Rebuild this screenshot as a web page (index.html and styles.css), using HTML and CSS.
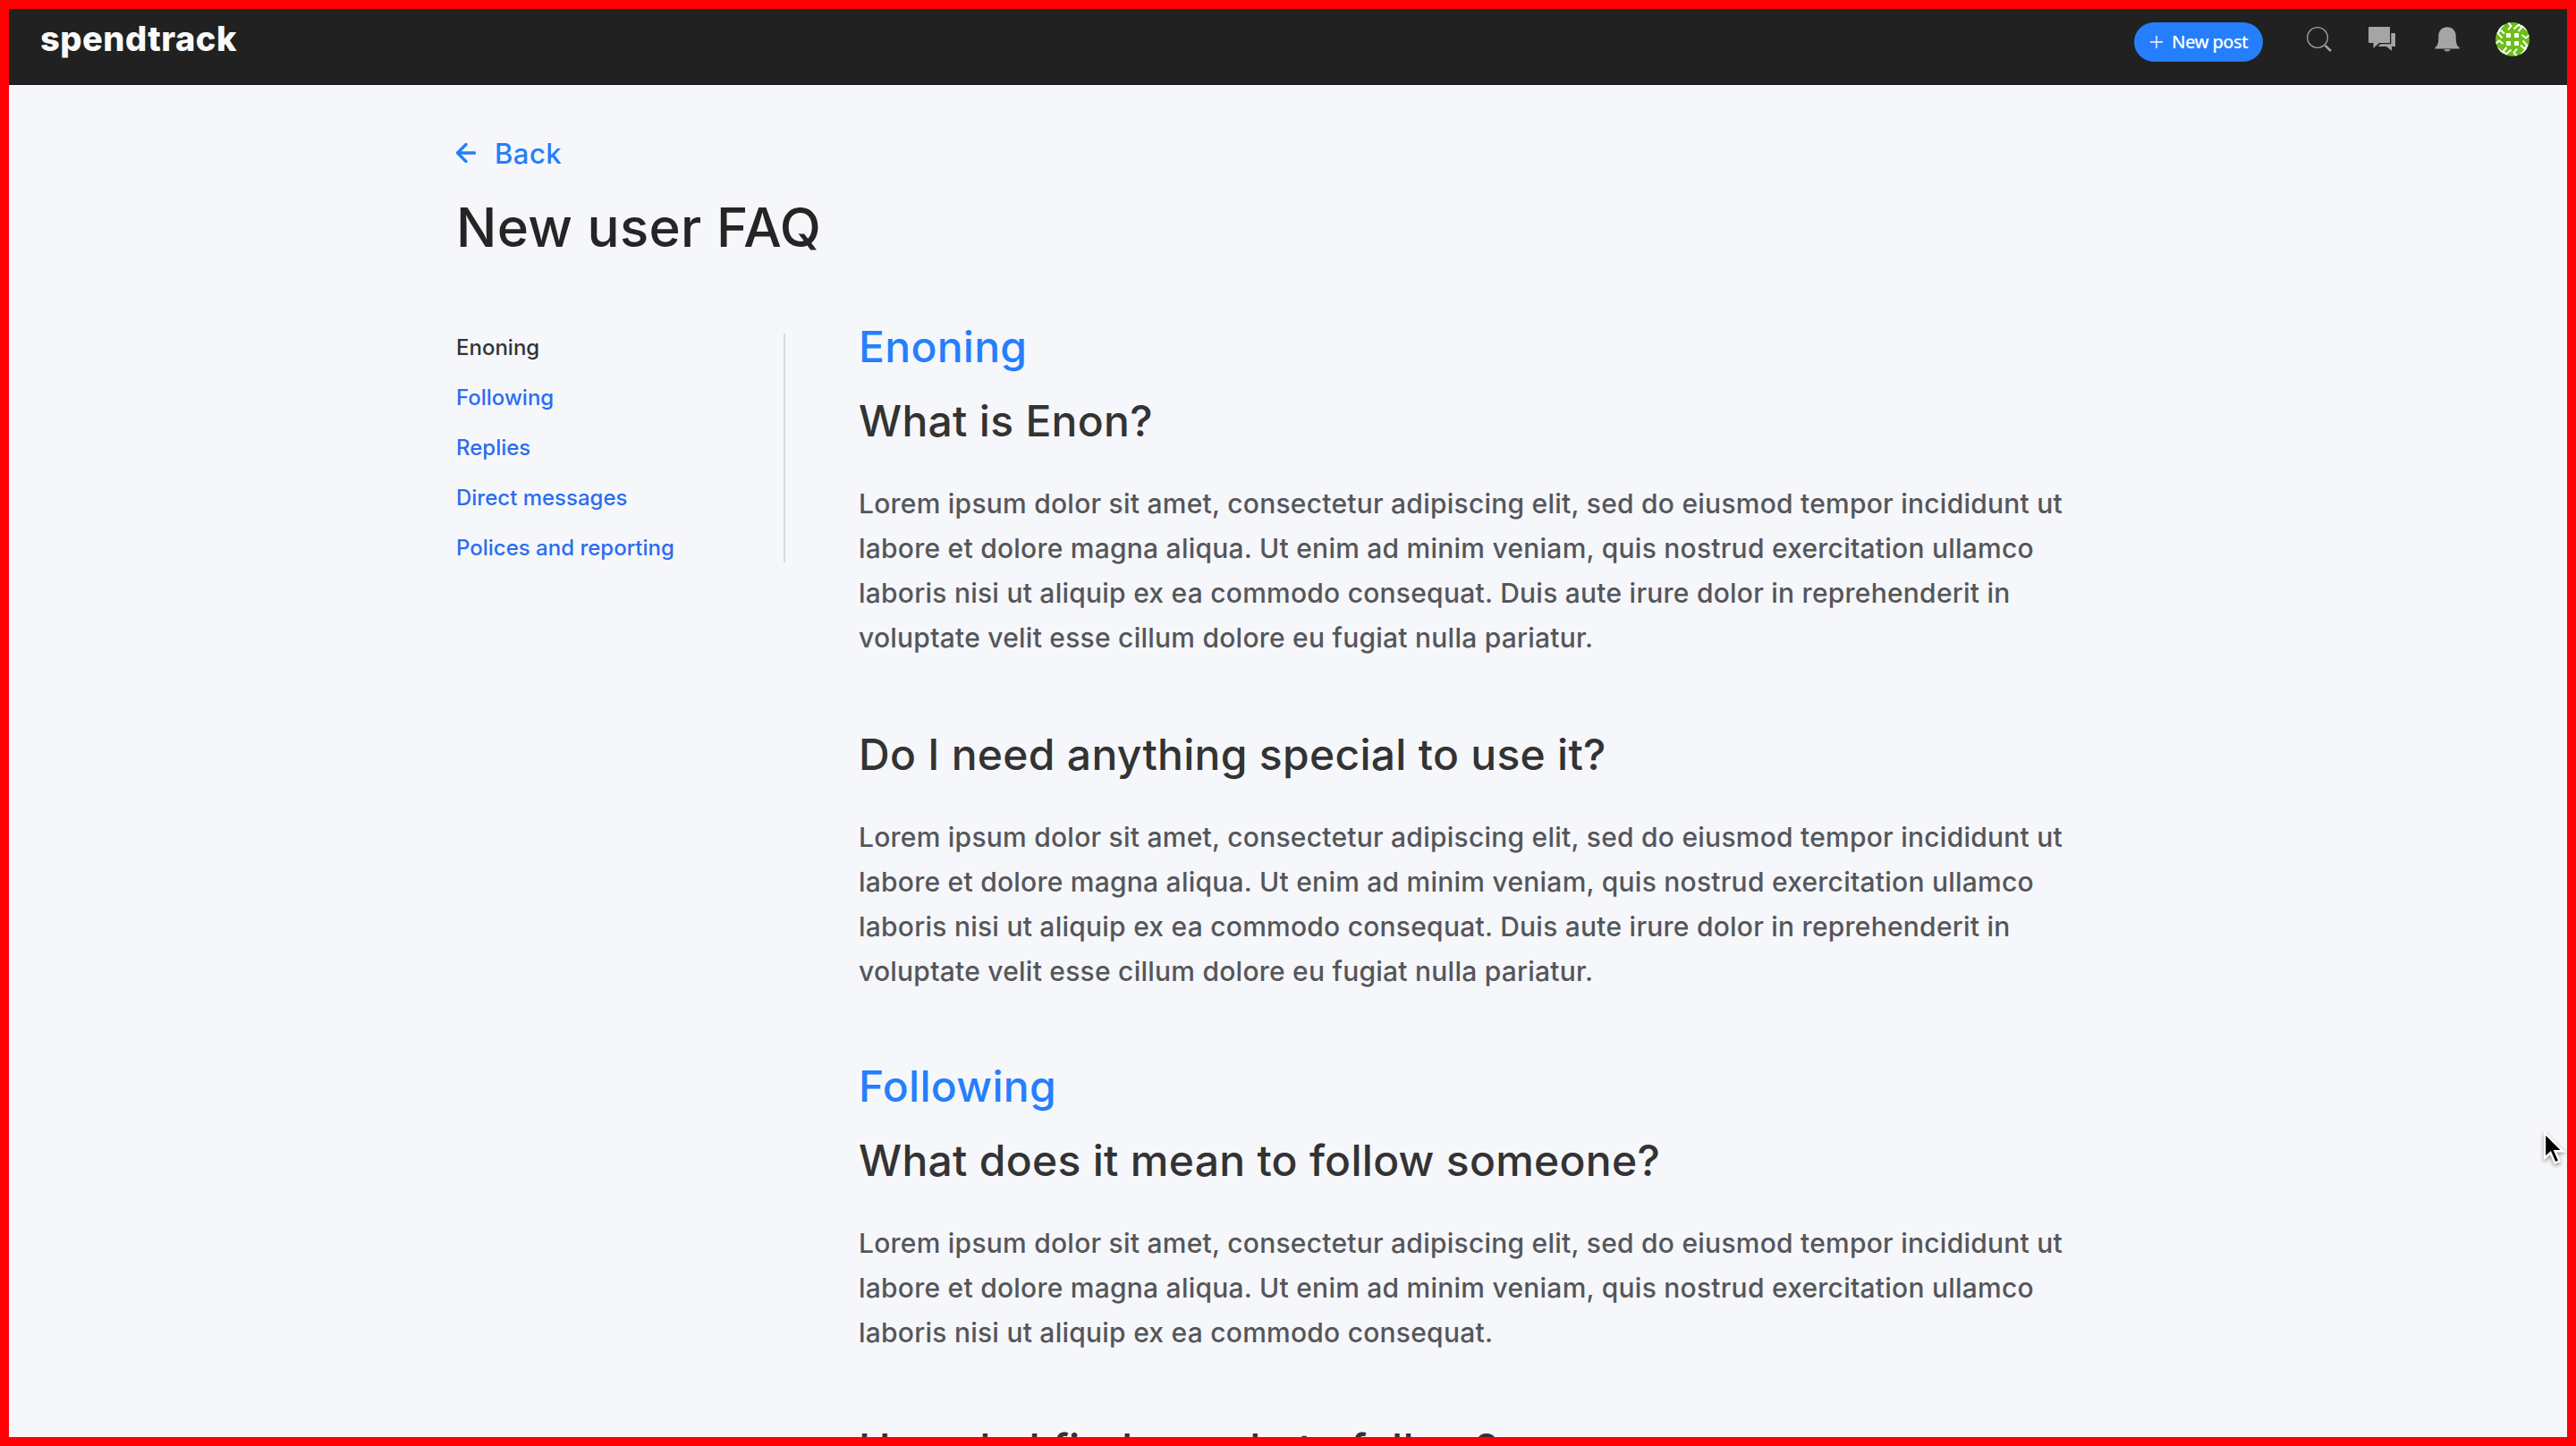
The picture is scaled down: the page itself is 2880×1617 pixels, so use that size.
FILE: index.html
```html
<!DOCTYPE html>
<html lang="en">

<head>
  <meta charset="utf-8">
  <title>New user FAQ - spendtrack</title>
  <link rel="stylesheet" href="styles.css">
</head>

<body>
  <header class="topbar">
    <a class="logo">spendtrack</a>
    <nav class="tools">
      <a class="new-post">
        <svg width="14" height="14" viewBox="0 0 14 14"><path d="M7 0v14M0 7h14" stroke="#fff" stroke-width="1.4" /></svg>
        <span>New post</span>
      </a>
      <svg class="icon-search" width="29" height="29" viewBox="0 0 29 29">
        <circle cx="12" cy="12" r="11.3" fill="none" stroke="#a5a5a5" stroke-width="1.3" />
        <path d="M20.6 20.8l6.4 6.4" stroke="#a5a5a5" stroke-width="2.6" />
      </svg>
      <svg class="icon-chat" width="30" height="28" viewBox="0 0 30 28">
        <path fill="#a5a5a5" d="M1 0h22q1 0 1 1v17H12l-6.500 6v-6H1q-1 0-1-1V1q0-1 1-1z" />
        <path fill="#a5a5a5" d="M25.300 7H29q1 0 1 1v14h-4v4.800L20 22h-9.500l3-2.800h11.800z" />
      </svg>
      <svg class="icon-bell" width="28" height="28" viewBox="0 0 28 28">
        <path fill="#a5a5a5" d="M14 .3C8.500.3 4.300 4.500 4.300 10c0 8-.6 10.500-3.900 13.300V24.500h27.200v-1.200C24.300 20.500 23.700 18 23.700 10 23.700 4.500 19.500.3 14 .3zM10.500 25.300c.7 3 6.300 3 7 0z" />
      </svg>
      <svg class="avatar" width="38" height="38" viewBox="0 0 38 38">
        <defs>
          <clipPath id="round"><circle cx="19" cy="19" r="19" /></clipPath>
          <g id="quarter">
            <path d="M12 12h5v5h-5z" fill="#fff" />
            <path d="M14 0l3.500 4-3.500 4.500M20.500 7.500L26 2.500l3.500 3-4 4.500M9.500 2L3 9" fill="none" stroke="#fff" stroke-width="1.900" />
          </g>
        </defs>
        <g clip-path="url(#round)">
          <rect width="38" height="38" fill="#6cbf17" />
          <use href="#quarter" />
          <use href="#quarter" transform="rotate(90 19 19)" />
          <use href="#quarter" transform="rotate(180 19 19)" />
          <use href="#quarter" transform="rotate(270 19 19)" />
        </g>
      </svg>
    </nav>
  </header>

  <main class="page">
    <a class="back">
      <svg width="22" height="22" viewBox="0 0 22 22"><path d="M20.500 11H2M11 1.500L1.500 11l9.500 9.500" /></svg>
      <span>Back</span>
    </a>
    <h1>New user FAQ</h1>

    <div class="columns">
      <ul class="side">
        <li class="active">Enoning</li>
        <li>Following</li>
        <li>Replies</li>
        <li>Direct messages</li>
        <li>Polices and reporting</li>
      </ul>

      <div class="content">
        <h2>Enoning</h2>
        <h3>What is Enon?</h3>
        <p>Lorem ipsum dolor sit amet, consectetur adipiscing elit, sed do eiusmod tempor incididunt ut<br>
          labore et dolore magna aliqua. Ut enim ad minim veniam, quis nostrud exercitation ullamco<br>
          laboris nisi ut aliquip ex ea commodo consequat. Duis aute irure dolor in reprehenderit in<br>
          voluptate velit esse cillum dolore eu fugiat nulla pariatur.</p>

        <h3>Do I need anything special to use it?</h3>
        <p>Lorem ipsum dolor sit amet, consectetur adipiscing elit, sed do eiusmod tempor incididunt ut<br>
          labore et dolore magna aliqua. Ut enim ad minim veniam, quis nostrud exercitation ullamco<br>
          laboris nisi ut aliquip ex ea commodo consequat. Duis aute irure dolor in reprehenderit in<br>
          voluptate velit esse cillum dolore eu fugiat nulla pariatur.</p>

        <h2>Following</h2>
        <h3>What does it mean to follow someone?</h3>
        <p>Lorem ipsum dolor sit amet, consectetur adipiscing elit, sed do eiusmod tempor incididunt ut<br>
          labore et dolore magna aliqua. Ut enim ad minim veniam, quis nostrud exercitation ullamco<br>
          laboris nisi ut aliquip ex ea commodo consequat.</p>

        <h3>How do I find people to follow?</h3>
      </div>
    </div>
  </main>

  <svg class="cursor" width="30" height="42" viewBox="0 0 30 42">
    <path d="M4 3v28l6.500-6 5 11.500 5-2.200-5-11h9z" fill="#000" stroke="#fff" stroke-width="2.400" />
  </svg>
</body>

</html>
```

FILE: styles.css
```css
* {
  box-sizing: border-box;
}

body {
  margin: 0;
  height: 1617px;
  overflow: hidden;
  border: 10px solid #ff0004;
  background-color: #f6f7fb;
  font-family: Inter, "Liberation Sans", sans-serif;
  font-weight: 500;
}

h1,
h2,
h3,
p,
ul {
  margin: 0;
  padding: 0;
  font-weight: 500;
}

.topbar {
  display: flex;
  justify-content: space-between;
  height: 85px;
  padding: 0 42px 0 35px;
  background-color: #212121;
  border-bottom: 1px solid #1a1414;
}

.logo {
  padding-top: 10px;
  color: #fafafa;
  font-size: 38px;
  font-weight: 800;
  letter-spacing: 0.5px;
  line-height: 46px;
}

.tools {
  display: flex;
  align-items: flex-start;
}

.new-post {
  display: flex;
  align-items: center;
  gap: 10px;
  width: 144px;
  height: 44px;
  margin-top: 15px;
  padding-left: 18px;
  border-radius: 22px;
  background-color: #257ffc;
  color: #fff;
  font-family: "Noto Sans", sans-serif;
  font-size: 20px;
  font-weight: 500;
  letter-spacing: -0.6px;
  white-space: nowrap;
}

.new-post span {
  margin-top: -1px;
}

.icon-search {
  margin: 20px 0 0 49px;
}

.icon-chat {
  margin: 20px 0 0 40px;
}

.icon-bell {
  margin: 20px 0 0 44px;
}

.avatar {
  margin: 15px 0 0 40px;
}

.page {
  padding: 51px 0 0 500px;
}

.back {
  display: flex;
  align-items: center;
  gap: 21px;
  height: 50px;
  color: #257ffc;
  font-size: 31px;
  letter-spacing: 0.5px;
}

.back path {
  fill: none;
  stroke: #257ffc;
  stroke-width: 3.4;
  stroke-linecap: round;
  stroke-linejoin: round;
}

h1 {
  margin-top: 22px;
  color: #252525;
  font-size: 60px;
  letter-spacing: 0.3px;
  line-height: 72px;
}

.columns {
  display: flex;
  align-items: flex-start;
  margin-top: 83px;
}

.side {
  width: 368px;
  height: 256px;
  margin-right: 82px;
  border-right: 2px solid #d9dadb;
  list-style: none;
  color: #2a6df0;
  font-size: 24px;
  line-height: 56px;
}

.side li:first-child {
  margin-top: -12px;
}

.side .active {
  color: #333;
}

.content {
  color: #55565a;
  font-size: 30px;
  letter-spacing: 0.24px;
  line-height: 50px;
  white-space: nowrap;
}

h2,
h3 {
  color: #333;
  font-size: 48px;
  letter-spacing: 0.28px;
  line-height: 58px;
}

h2 {
  margin-top: -2px;
  margin-bottom: 25px;
  color: #257ffc;
}

h3 {
  margin-bottom: 38px;
}

.content h2:first-child {
  margin-top: -14px;
}

.content p {
  margin-bottom: 77px;
}

.cursor {
  position: absolute;
  left: 2841px;
  top: 1264px;
  filter: drop-shadow(0 2px 2px rgba(0, 0, 0, 0.4));
}
```
